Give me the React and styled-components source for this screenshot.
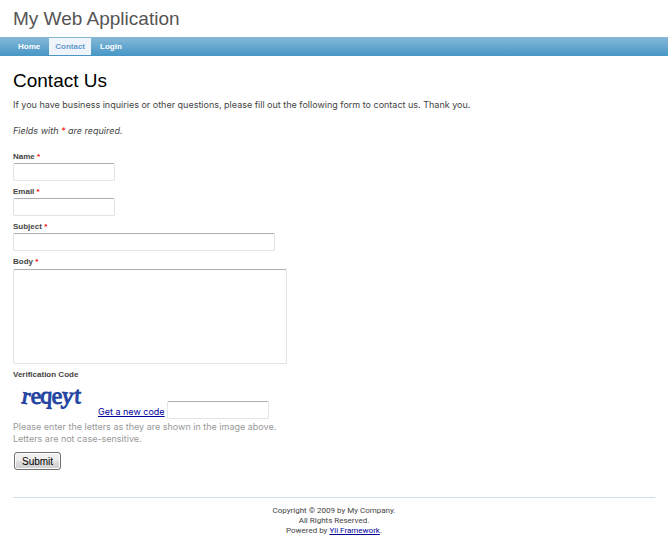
import React from "react";
import styled, { createGlobalStyle } from "styled-components";

const GlobalStyle = createGlobalStyle`
  *, *::before, *::after { box-sizing: border-box; }
  body {
    margin: 0;
    background: #fff;
    color: #444;
    font: 9px/13px Inter, "Liberation Sans", Arial, sans-serif;
  }
`;

const Logo = styled.header`
  padding: 8px 13px 7px;
  font-family: "Liberation Sans", Arial, sans-serif;
  font-size: 19px;
  line-height: 22px;
  color: #555;
`;

const Nav = styled.nav`
  display: flex;
  padding: 1px 12px;
  height: 19px;
  background: linear-gradient(#86b9d8, #4696c6);
`;

const NavLink = styled.a`
  padding: 0 6px;
  font-family: "Liberation Sans", Arial, sans-serif;
  font-size: 8px;
  line-height: 17px;
  font-weight: bold;
  text-decoration: none;
  color: ${(p) => (p.$active ? "#6399cd" : "#fff")};
  background: ${(p) => (p.$active ? "#eff4fa" : "transparent")};
  margin-right: 3px;
`;

const Content = styled.main`
  padding: 13px 13px 0;
`;

const Title = styled.h1`
  margin: 0 0 5px;
  font-family: "Liberation Sans", Arial, sans-serif;
  font-size: 19px;
  line-height: 24px;
  font-weight: normal;
  color: #000;
`;

const Text = styled.p`
  margin: 0 0 13px;
`;

const Note = styled(Text)`
  font-style: italic;
`;

const Required = styled.span`
  color: #f00;
`;

const Form = styled.form`
  display: flex;
  flex-direction: column;
`;

const Field = styled.div`
  display: flex;
  flex-direction: column;
  align-items: flex-start;
  margin-bottom: 4px;
`;

const Label = styled.label`
  font-family: "Liberation Sans", Arial, sans-serif;
  font-size: 8px;
  line-height: 13px;
  font-weight: bold;
`;

const Input = styled.input`
  width: ${(p) => p.$width || 102}px;
  max-width: 100%;
  height: 18px;
  padding: 1px 3px;
  font: inherit;
  background: #fff;
  border: 1px solid #dfe3ea;
  border-top-color: #abadb3;
  border-radius: 2px;
`;

const TextArea = styled(Input)`
  height: 95px;
  margin-top: 1px;
  resize: none;
`;

const CaptchaRow = styled.div`
  display: flex;
  align-items: flex-end;
`;

const Captcha = styled.svg`
  width: 82px;
  height: 38px;
  margin-right: 3px;
`;

const Link = styled.a`
  color: #00009c;
`;

const CodeLink = styled(Link)`
  margin-right: 2px;
  line-height: 15px;
`;

const Hint = styled.p`
  margin: 2px 0 0;
  line-height: 12px;
  color: #999;
`;

const Submit = styled.button`
  align-self: flex-start;
  height: 18px;
  margin: 7px 1px 0;
  padding: 1px 7px 0;
  font: 10px/15px "Liberation Sans", Arial, sans-serif;
  color: #000;
  border: 1px solid #707070;
  border-radius: 3px;
  background: linear-gradient(#f2f2f2 0%, #ebebeb 50%, #ddd 50%, #cfcfcf 100%);
  box-shadow: inset 0 0 0 1px #fcfcfc;
`;

const Footer = styled.footer`
  margin: 27px 13px 0;
  padding: 8px 0 7px;
  border-top: 1px solid #c9e0ed;
  font-family: Roboto, "Liberation Sans", sans-serif;
  font-size: 8px;
  line-height: 10px;
  text-align: center;
`;

const fields = [
  { id: "name", label: "Name" },
  { id: "email", label: "Email" },
  { id: "subject", label: "Subject", width: 262 },
];

export default function App() {
  return (
    <>
      <GlobalStyle />
      <Logo>My Web Application</Logo>
      <Nav>
        <NavLink href="#home">Home</NavLink>
        <NavLink href="#contact" $active aria-current="page">Contact</NavLink>
        <NavLink href="#login">Login</NavLink>
      </Nav>
      <Content>
        <Title>Contact Us</Title>
        <Text>
          If you have business inquiries or other questions, please fill out the
          following form to contact us. Thank you.
        </Text>
        <Note>
          Fields with <Required>*</Required> are required.
        </Note>
        <Form onSubmit={(e) => e.preventDefault()}>
          {fields.map((f) => (
            <Field key={f.id}>
              <Label htmlFor={f.id}>
                {f.label} <Required>*</Required>
              </Label>
              <Input id={f.id} name={f.id} $width={f.width} />
            </Field>
          ))}
          <Field>
            <Label htmlFor="body">
              Body <Required>*</Required>
            </Label>
            <TextArea as="textarea" id="body" name="body" $width={274} />
          </Field>
          <Label htmlFor="code">Verification Code</Label>
          <CaptchaRow>
            <Captcha viewBox="0 0 82 38" role="img" aria-label="Captcha">
              <text
                x="8 18 27 39 48 61"
                y="22 23 22 23 22 22"
                rotate="10 -3 3 -3 6 3"
                fill="#2344a0"
                stroke="#2344a0"
                strokeWidth="1"
                fontFamily="Liberation Serif, serif"
                fontSize="24"
              >
                reqeyt
              </text>
            </Captcha>
            <CodeLink href="#new-code">Get a new code</CodeLink>
            <Input id="code" name="code" />
          </CaptchaRow>
          <Hint>
            Please enter the letters as they are shown in the image above.
            <br />
            Letters are not case-sensitive.
          </Hint>
          <Submit type="submit">Submit</Submit>
        </Form>
      </Content>
      <Footer>
        Copyright © 2009 by My Company.
        <br />
        All Rights Reserved.
        <br />
        Powered by <Link href="#yii">Yii Framework</Link>.
      </Footer>
    </>
  );
}
